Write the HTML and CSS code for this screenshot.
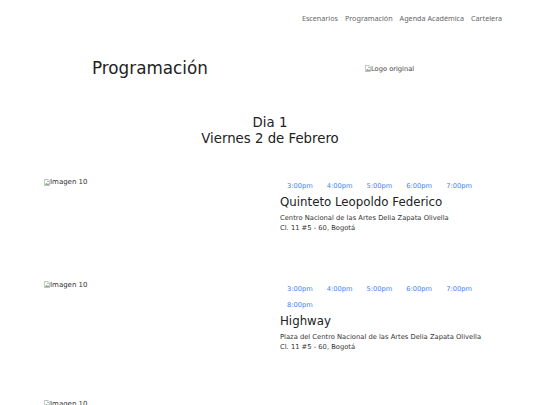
FILE: index.html
```html
<!DOCTYPE html>
<html lang="es">
<head>
<meta charset="utf-8">
<title>Programación</title>
<link rel="stylesheet" href="styles.css">
</head>
<body>
<nav class="topnav">
  <a class="nav-link" href="#">Escenarios</a>
  <a class="nav-link" href="#">Programación</a>
  <a class="nav-link" href="#">Agenda Académica</a>
  <a class="nav-link" href="#">Cartelera</a>
</nav>
<header class="header">
  <div class="header-left"><h1 class="page-title">Programación</h1></div>
  <div class="header-right">
    <span class="broken-img logo-alt"><svg class="bi-icon" viewBox="0 0 8 9" width="8" height="9"><path d="M0.5 0.5h5l2 2v6h-7z" fill="#fff" stroke="#999" stroke-width="0.8"/><path d="M1.2 7.5l2-2.5 1.5 1.6 1-1 1.3 1.9z" fill="#5a9e4a"/><circle cx="5.3" cy="3" r="0.8" fill="#4a90d9"/></svg>Logo original</span>
  </div>
</header>
<section class="day">
  <h2 class="day-title">Dia 1<br>Viernes 2 de Febrero</h2>
</section>
<main class="events">
  <article class="event">
    <div class="event-img"><span class="broken-img"><svg class="bi-icon" viewBox="0 0 8 9" width="8" height="9"><path d="M0.5 0.5h5l2 2v6h-7z" fill="#fff" stroke="#999" stroke-width="0.8"/><path d="M1.2 7.5l2-2.5 1.5 1.6 1-1 1.3 1.9z" fill="#5a9e4a"/><circle cx="5.3" cy="3" r="0.8" fill="#4a90d9"/></svg>Imagen 10</span></div>
    <div class="event-info">
      <div class="times"><a class="time" href="#">3:00pm</a><a class="time" href="#">4:00pm</a><a class="time" href="#">5:00pm</a><a class="time" href="#">6:00pm</a><a class="time" href="#">7:00pm</a></div>
      <h3 class="event-title">Quinteto Leopoldo Federico</h3>
      <p class="event-place">Centro Nacional de las Artes Delia Zapata Olivella<br>Cl. 11 #5 - 60, Bogotá</p>
    </div>
  </article>
  <article class="event">
    <div class="event-img"><span class="broken-img"><svg class="bi-icon" viewBox="0 0 8 9" width="8" height="9"><path d="M0.5 0.5h5l2 2v6h-7z" fill="#fff" stroke="#999" stroke-width="0.8"/><path d="M1.2 7.5l2-2.5 1.5 1.6 1-1 1.3 1.9z" fill="#5a9e4a"/><circle cx="5.3" cy="3" r="0.8" fill="#4a90d9"/></svg>Imagen 10</span></div>
    <div class="event-info">
      <div class="times"><a class="time" href="#">3:00pm</a><a class="time" href="#">4:00pm</a><a class="time" href="#">5:00pm</a><a class="time" href="#">6:00pm</a><a class="time" href="#">7:00pm</a><a class="time" href="#">8:00pm</a></div>
      <h3 class="event-title">Highway</h3>
      <p class="event-place">Plaza del Centro Nacional de las Artes Delia Zapata Olivella<br>Cl. 11 #5 - 60, Bogotá</p>
    </div>
  </article>
  <article class="event">
    <div class="event-img"><span class="broken-img"><svg class="bi-icon" viewBox="0 0 8 9" width="8" height="9"><path d="M0.5 0.5h5l2 2v6h-7z" fill="#fff" stroke="#999" stroke-width="0.8"/><path d="M1.2 7.5l2-2.5 1.5 1.6 1-1 1.3 1.9z" fill="#5a9e4a"/><circle cx="5.3" cy="3" r="0.8" fill="#4a90d9"/></svg>Imagen 10</span></div>
    <div class="event-info">
      <div class="times"><a class="time" href="#">3:00pm</a><a class="time" href="#">4:00pm</a></div>
      <h3 class="event-title">Concierto</h3>
      <p class="event-place">Centro Nacional de las Artes Delia Zapata Olivella<br>Cl. 11 #5 - 60, Bogotá</p>
    </div>
  </article>
</main>
</body>
</html>
```
FILE: styles.css
```css
* { box-sizing: border-box; }
html, body { margin: 0; padding: 0; background: #fff; }
body {
  font-family: "DejaVu Sans", sans-serif;
  color: #212529;
  width: 540px;
  overflow-x: hidden;
}
.topnav {
  display: flex;
  justify-content: flex-end;
  align-items: center;
  height: 36px;
  padding-right: 38px;
  gap: 7px;
}
.nav-link {
  font-family: "Noto Sans", sans-serif;
  font-size: 7.2px;
  color: #666;
  text-decoration: none;
  line-height: 10px;
}
.header {
  display: flex;
  align-items: center;
  height: 64px;
}
.header-left {
  width: 270px;
  padding-left: 92px;
}
.page-title {
  margin: 0;
  font-size: 16.8px;
  font-weight: normal;
  line-height: 20px;
  color: #222;
}
.header-right {
  padding-left: 95px;
  line-height: 10px;
}
.broken-img {
  display: inline-flex;
  align-items: center;
  font-family: "DejaVu Sans", sans-serif;
  font-size: 7px;
  color: #333;
  line-height: 10px;
}
.logo-alt {
  font-size: 6.7px;
  color: #444;
}
.bi-icon { width: 6px; height: 7px; flex: none; }
.day {
  margin-top: 15px;
  text-align: center;
}
.day-title {
  margin: 0;
  font-size: 13.3px;
  font-weight: normal;
  line-height: 16px;
  color: #222;
}
.events {
  margin-top: 31px;
  display: flex;
  flex-direction: column;
  gap: 48px;
}
.event {
  display: flex;
  align-items: flex-start;
}
.event-img {
  display: flex;
  width: 280px;
  padding-left: 44px;
  margin-top: -1px;
  flex: none;
  line-height: 10px;
}
.event-info {
  width: 230px;
}
.times {
  display: flex;
  flex-wrap: wrap;
}
.time {
  display: flex;
  align-items: center;
  height: 16.5px;
  padding: 0 7px;
  font-size: 6.7px;
  color: #3b82f6;
  text-decoration: none;
}
.event-title {
  margin: 0;
  font-size: 11.8px;
  font-weight: normal;
  line-height: 14px;
  color: #222;
}
.event-place {
  margin: 4px 0 0;
  font-size: 6.75px;
  line-height: 10px;
  color: #333;
}
```
